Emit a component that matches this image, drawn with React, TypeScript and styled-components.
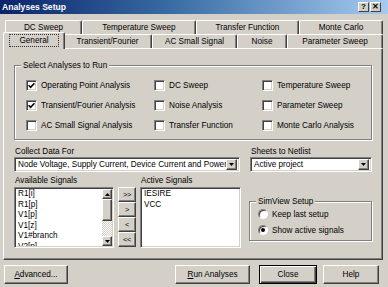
import styled, { createGlobalStyle, css } from "styled-components";

const FACE = "#d4d0c8";

const GlobalStyle = createGlobalStyle`
  html, body {
    margin: 0;
    padding: 0;
    background: ${FACE};
  }
  body {
    font-family: "Liberation Sans", Arial, sans-serif;
    font-size: 8.2px;
    color: #000;
  }
`;

const Window = styled.div`
  width: 388px;
  height: 287px;
  background: ${FACE};
  display: flex;
  flex-direction: column;
  overflow: hidden;
`;

const TitleBar = styled.div`
  flex: none;
  height: 14px;
  display: flex;
  align-items: center;
  padding: 0 7px 0 2px;
  background: linear-gradient(90deg, #0a246a 0%, #3a6ea5 45%, #a6caf0 100%);
  color: #fff;
  font-weight: bold;
  font-size: 8.6px;
`;

const TitleText = styled.span`
  flex: 1;
`;

const CaptionButton = styled.div`
  width: 11px;
  height: 10px;
  box-sizing: border-box;
  background: ${FACE};
  border-top: 1px solid #fff;
  border-left: 1px solid #fff;
  border-right: 1px solid #404040;
  border-bottom: 1px solid #404040;
  display: flex;
  align-items: center;
  justify-content: center;
  color: #000;
  font-size: 8px;
  font-weight: bold;
  line-height: 1;
  & + & {
    margin-left: 1px;
  }
`;

const Body = styled.div`
  flex: 1;
  display: flex;
  flex-direction: column;
  padding: 6px 5px 0 3px;
`;

const TabRow = styled.div`
  display: flex;
  height: 14px;
  padding-left: 2px;
`;

const Tab = styled.div<{ $w: number; $active?: boolean }>`
  flex: none;
  width: ${(p) => p.$w}px;
  height: 14px;
  box-sizing: border-box;
  display: flex;
  align-items: center;
  justify-content: center;
  white-space: nowrap;
  background: ${FACE};
  border-top: 1px solid #fff;
  border-left: 1px solid #fff;
  border-right: 1px solid #404040;
  border-radius: 2px 2px 0 0;
  box-shadow: inset -1px 0 0 #808080;
  ${(p) =>
    p.$active &&
    css`
      position: relative;
      z-index: 1;
      width: ${p.$w + 4}px;
      height: 17px;
      margin: -2px -2px -1px;
      padding-bottom: 1px;
    `}
`;

const FocusText = styled.span`
  outline: 1px dotted #303030;
  outline-offset: 1px;
  padding: 0 8px;
`;

const Panel = styled.div`
  flex: none;
  height: 212px;
  box-sizing: border-box;
  border-top: 1px solid #fff;
  border-left: 1px solid #fff;
  border-right: 1px solid #404040;
  border-bottom: 1px solid #404040;
  box-shadow: inset -1px -1px 0 #808080;
  padding: 16px 10px 0 10px;
  display: flex;
  flex-direction: column;
`;

const Group = styled.div<{ $h: number }>`
  position: relative;
  box-sizing: border-box;
  height: ${(p) => p.$h}px;
  border: 1px solid #808080;
  box-shadow: inset 1px 1px 0 #fff, 1px 1px 0 #fff;
`;

const Legend = styled.span`
  position: absolute;
  top: -6px;
  left: 6px;
  padding: 0 2px;
  background: ${FACE};
  line-height: 11px;
`;

const AnalysisGrid = styled.div`
  display: grid;
  grid-template-columns: 128px 108px 1fr;
  grid-auto-rows: 20px;
  padding: 9px 0 0 11px;
`;

const Option = styled.label`
  display: flex;
  align-items: center;
  gap: 4px;
  white-space: nowrap;
`;

const Sunken = css`
  box-sizing: border-box;
  background: #fff;
  border-top: 1px solid #808080;
  border-left: 1px solid #808080;
  border-right: 1px solid #fff;
  border-bottom: 1px solid #fff;
  box-shadow: inset 1px 1px 0 #404040, inset -1px -1px 0 ${FACE};
`;

const Raised = css`
  box-sizing: border-box;
  background: ${FACE};
  border-top: 1px solid #fff;
  border-left: 1px solid #fff;
  border-right: 1px solid #404040;
  border-bottom: 1px solid #404040;
  box-shadow: inset -1px -1px 0 #808080;
`;

const Box = styled.span`
  ${Sunken};
  flex: none;
  width: 11px;
  height: 11px;
  display: flex;
  align-items: center;
  justify-content: center;
`;

const Radio = styled.span`
  flex: none;
  width: 10px;
  height: 10px;
  box-sizing: border-box;
  border-radius: 50%;
  background: #fff;
  border: 1px solid;
  border-color: #808080 #fff #fff #808080;
  box-shadow: inset 1px 1px 0 #404040;
  display: flex;
  align-items: center;
  justify-content: center;
`;

const Dot = styled.span`
  width: 4px;
  height: 4px;
  border-radius: 50%;
  background: #000;
`;

const FieldRow = styled.div`
  display: grid;
  grid-template-columns: 226px 122px;
  column-gap: 10px;
  margin-top: 6px;
`;

const Label = styled.div`
  height: 11px;
  line-height: 11px;
  padding-left: 1px;
  white-space: nowrap;
`;

const Combo = styled.div`
  ${Sunken};
  height: 15px;
  display: flex;
  align-items: center;
  padding: 2px 2px 2px 3px;
  overflow: hidden;
`;

const ComboText = styled.span`
  flex: 1;
  white-space: nowrap;
  overflow: hidden;
`;

const ArrowButton = styled.span<{ $w?: number; $h?: number }>`
  ${Raised};
  flex: none;
  width: ${(p) => p.$w ?? 11}px;
  height: ${(p) => p.$h ?? 11}px;
  display: flex;
  align-items: center;
  justify-content: center;
`;

const SignalsRow = styled.div`
  display: grid;
  grid-template-columns: 100px 18px 101px 1fr;
  grid-template-rows: 12px 61px;
  column-gap: 4px;
  margin-top: 3px;
`;

const ListBox = styled.div`
  ${Sunken};
  display: flex;
  padding: 1px;
  line-height: 10.5px;
  overflow: hidden;
`;

const ListItems = styled.div`
  flex: 1;
  padding: 0 0 0 2px;
  white-space: nowrap;
  overflow: hidden;
`;

const ScrollBar = styled.div`
  flex: none;
  width: 10px;
  display: flex;
  flex-direction: column;
  background: repeating-conic-gradient(#fff 0 25%, ${FACE} 0 50%) 0 0 / 2px 2px;
`;

const Thumb = styled.div`
  ${Raised};
  height: 22px;
`;

const Track = styled.div`
  flex: 1;
`;

const MoveButtons = styled.div`
  display: flex;
  flex-direction: column;
  grid-row: 2;
  grid-column: 2;
`;

const MoveButton = styled.div`
  ${Raised};
  height: 15px;
  display: flex;
  align-items: center;
  justify-content: center;
  font-size: 7.5px;
  letter-spacing: -0.5px;
`;

const SimColumn = styled.div`
  grid-row: 1 / span 2;
  grid-column: 4;
  padding: 26px 0 0 4px;
`;

const RadioList = styled.div`
  display: grid;
  grid-auto-rows: 16px;
  padding: 4px 0 0 8px;
`;

const Footer = styled.div`
  display: flex;
  align-items: center;
  margin-top: 5px;
  padding: 0 4px 0 1px;
`;

const Button = styled.div<{ $w: number; $default?: boolean }>`
  ${Raised};
  width: ${(p) => p.$w}px;
  height: 19px;
  display: flex;
  align-items: center;
  justify-content: center;
  white-space: nowrap;
  ${(p) =>
    p.$default &&
    css`
      border: 1px solid #000;
      box-shadow: inset 1px 1px 0 #fff, inset -1px -1px 0 #404040,
        inset -2px -2px 0 #808080;
    `}
`;

const Spacer = styled.div`
  flex: 1;
`;

const FooterGap = styled.div<{ $w: number }>`
  width: ${(p) => p.$w}px;
`;

function Check() {
  return (
    <svg width="7" height="7" viewBox="0 0 7 7">
      <path d="M0.6 3.2 L2.6 5.3 L6.4 1.2" fill="none" stroke="#000" strokeWidth="1.6" />
    </svg>
  );
}

function Tri({ up }: { up?: boolean }) {
  return (
    <svg width="5" height="3" viewBox="0 0 5 3">
      <path d={up ? "M0 3 L5 3 L2.5 0 Z" : "M0 0 L5 0 L2.5 3 Z"} fill="#000" />
    </svg>
  );
}

const analyses = [
  { label: "Operating Point Analysis", on: true },
  { label: "DC Sweep" },
  { label: "Temperature Sweep" },
  { label: "Transient/Fourier Analysis", on: true },
  { label: "Noise Analysis" },
  { label: "Parameter Sweep" },
  { label: "AC Small Signal Analysis" },
  { label: "Transfer Function" },
  { label: "Monte Carlo Analysis" },
];

const backTabs = [
  { label: "DC Sweep", w: 77 },
  { label: "Temperature Sweep", w: 114 },
  { label: "Transfer Function", w: 103 },
  { label: "Monte Carlo", w: 84 },
];

const frontTabs = [
  { label: "General", w: 58 },
  { label: "Transient/Fourier", w: 89 },
  { label: "AC Small Signal", w: 85 },
  { label: "Noise", w: 50 },
  { label: "Parameter Sweep", w: 96 },
];

const available = ["R1[i]", "R1[p]", "V1[p]", "V1[z]", "V1#branch", "V2[p]"];

export default function App() {
  return (
    <>
      <GlobalStyle />
      <Window>
        <TitleBar>
          <TitleText>Analyses Setup</TitleText>
          <CaptionButton>?</CaptionButton>
          <CaptionButton>✕</CaptionButton>
        </TitleBar>
        <Body>
          <TabRow>
            {backTabs.map((t) => (
              <Tab key={t.label} $w={t.w}>
                {t.label}
              </Tab>
            ))}
          </TabRow>
          <TabRow>
            {frontTabs.map((t, i) => (
              <Tab key={t.label} $w={t.w} $active={i === 0}>
                {i === 0 ? <FocusText>{t.label}</FocusText> : t.label}
              </Tab>
            ))}
          </TabRow>
          <Panel>
            <Group $h={75}>
              <Legend>Select Analyses to Run</Legend>
              <AnalysisGrid>
                {analyses.map((a) => (
                  <Option key={a.label}>
                    <Box>{a.on && <Check />}</Box>
                    {a.label}
                  </Option>
                ))}
              </AnalysisGrid>
            </Group>

            <FieldRow>
              <Label>Collect Data For</Label>
              <Label>Sheets to Netlist</Label>
              <Combo>
                <ComboText>Node Voltage, Supply Current, Device Current and Power</ComboText>
                <ArrowButton>
                  <Tri />
                </ArrowButton>
              </Combo>
              <Combo>
                <ComboText>Active project</ComboText>
                <ArrowButton>
                  <Tri />
                </ArrowButton>
              </Combo>
            </FieldRow>

            <SignalsRow>
              <Label>Available Signals</Label>
              <span />
              <Label>Active Signals</Label>
              <ListBox>
                <ListItems>
                  {available.map((s) => (
                    <div key={s}>{s}</div>
                  ))}
                </ListItems>
                <ScrollBar>
                  <ArrowButton $w={10} $h={10}>
                    <Tri up />
                  </ArrowButton>
                  <Thumb />
                  <Track />
                  <ArrowButton $w={10} $h={10}>
                    <Tri />
                  </ArrowButton>
                </ScrollBar>
              </ListBox>
              <MoveButtons>
                <MoveButton>&gt;&gt;</MoveButton>
                <MoveButton>&gt;</MoveButton>
                <MoveButton>&lt;</MoveButton>
                <MoveButton>&lt;&lt;</MoveButton>
              </MoveButtons>
              <ListBox>
                <ListItems>
                  <div>IESIRE</div>
                  <div>VCC</div>
                </ListItems>
              </ListBox>
              <SimColumn>
                <Group $h={40}>
                  <Legend>SimView Setup</Legend>
                  <RadioList>
                    <Option>
                      <Radio />
                      Keep last setup
                    </Option>
                    <Option>
                      <Radio>
                        <Dot />
                      </Radio>
                      Show active signals
                    </Option>
                  </RadioList>
                </Group>
              </SimColumn>
            </SignalsRow>
          </Panel>
          <Footer>
            <Button $w={64}>
              <span>
                <u>A</u>dvanced...
              </span>
            </Button>
            <Spacer />
            <Button $w={75}>
              <span>
                <u>R</u>un Analyses
              </span>
            </Button>
            <FooterGap $w={9} />
            <Button $w={58} $default>
              Close
            </Button>
            <FooterGap $w={6} />
            <Button $w={56}>Help</Button>
          </Footer>
        </Body>
      </Window>
    </>
  );
}
